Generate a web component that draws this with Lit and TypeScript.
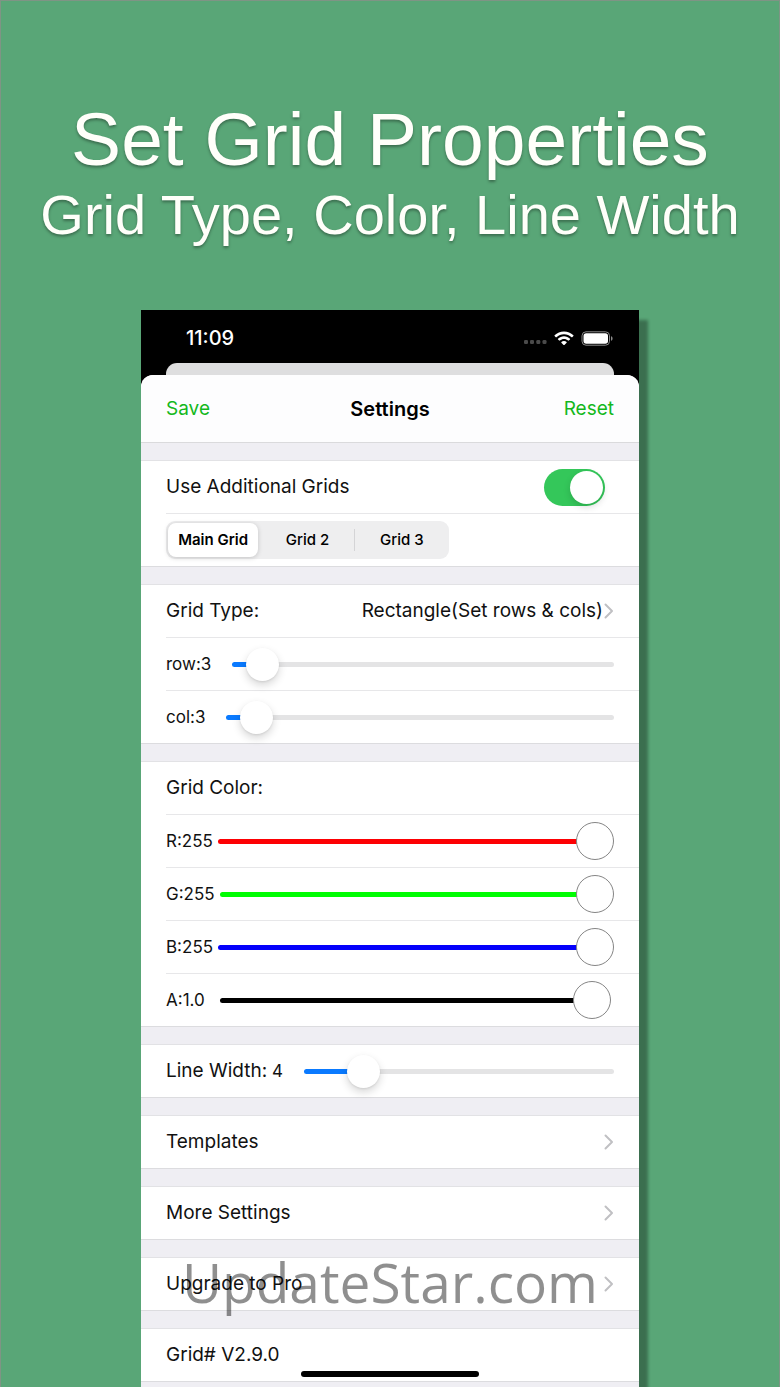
import { LitElement, html, css } from "lit";
import { customElement, property, state } from "lit/decorators.js";

type Skin = "ios" | "red" | "lime" | "blue" | "black";

interface SliderSpec {
  id: string;
  label: string;
  reading?: string;
  value: number;
  skin: Skin;
  spacing: "wide" | "tight" | "medium";
}

const GRID_SLIDERS: SliderSpec[] = [
  { id: "row", label: "row:3", value: 39, skin: "ios", spacing: "wide" },
  { id: "col", label: "col:3", value: 39, skin: "ios", spacing: "wide" },
];

const COLOR_SLIDERS: SliderSpec[] = [
  { id: "red", label: "R:255", value: 1000, skin: "red", spacing: "tight" },
  { id: "green", label: "G:255", value: 1000, skin: "lime", spacing: "tight" },
  { id: "blue", label: "B:255", value: 1000, skin: "blue", spacing: "tight" },
  { id: "alpha", label: "A:1.0", value: 992, skin: "black", spacing: "medium" },
];

const LINE_SLIDER: SliderSpec = {
  id: "line",
  label: "Line Width:",
  reading: "4",
  value: 157,
  skin: "ios",
  spacing: "wide",
};

const chevron = html`<svg class="chevron" viewBox="0 0 10 16" aria-hidden="true">
  <path d="M1.5 1.5 8 8l-6.5 6.5" />
</svg>`;

@customElement("slider-row")
class SliderRow extends LitElement {
  @property({ attribute: false }) spec!: SliderSpec;
  @state() private current: number | null = null;

  static styles = css`
    :host {
      display: block;
      height: 100%;
    }
    .line {
      display: flex;
      align-items: center;
      height: 100%;
    }
    .wide {
      gap: 21px;
    }
    .medium {
      gap: 15px;
    }
    .tight {
      gap: 5px;
    }
    .label {
      font-size: 17px;
      line-height: 24px;
      white-space: nowrap;
    }
    .name {
      font-size: 19px;
    }
    .range {
      appearance: none;
      flex: 1;
      min-width: 0;
      width: 100%;
      height: 40px;
      margin: 0;
      background: transparent;
      --track: #e4e4e5;
      --size: 33px;
      --ring: none;
      --lift: 0 4px 9px rgba(0, 0, 0, 0.16), 0 1px 2px rgba(0, 0, 0, 0.08);
    }
    .range::-webkit-slider-runnable-track {
      height: 5px;
      border-radius: 3px;
      background: linear-gradient(
        to right,
        var(--tint) var(--fill),
        var(--track) var(--fill)
      );
    }
    .range::-webkit-slider-thumb {
      appearance: none;
      box-sizing: border-box;
      width: var(--size);
      height: var(--size);
      margin-top: calc((5px - var(--size)) / 2);
      border: var(--ring);
      border-radius: 50%;
      background: #fff;
      box-shadow: var(--lift);
    }
    .ios {
      --tint: #0a7aff;
    }
    .red {
      --tint: #fd0003;
    }
    .lime {
      --tint: #00fd02;
    }
    .blue {
      --tint: #0400fb;
    }
    .black {
      --tint: #000;
    }
    .red,
    .lime,
    .blue,
    .black {
      --track: transparent;
      --size: 38px;
      --ring: 1px solid #858585;
      --lift: none;
    }
  `;

  private onInput(e: Event) {
    this.current = Number((e.target as HTMLInputElement).value);
  }

  render() {
    const s = this.spec;
    const value = this.current ?? s.value;
    return html`<div class="line ${s.spacing}">
      <label class="label" for=${s.id}
        >${s.reading ? html`<span class="name">${s.label}</span> ${s.reading}` : s.label}</label
      >
      <input
        class="range ${s.skin}"
        id=${s.id}
        type="range"
        min="0"
        max="1000"
        .value=${String(value)}
        style="--fill: calc(var(--size) / 2 + (100% - var(--size)) * ${value / 1000})"
        @input=${this.onInput}
      />
    </div>`;
  }
}

@customElement("app-root")
class AppRoot extends LitElement {
  static styles = css`
    :host {
      display: block;
      font-family: Inter, "Liberation Sans", sans-serif;
      color: #111;
    }
    .page {
      box-sizing: border-box;
      display: flex;
      flex-direction: column;
      min-height: 100vh;
      overflow: hidden;
      border: 1px solid #7f9485;
      border-bottom: 0;
      background: #59a677;
    }
    .hero {
      padding: 96px 0 61px;
      font-family: "Liberation Sans", Arial, sans-serif;
      text-align: center;
      color: #fffffa;
      text-shadow: 0 2px 3px rgba(0, 0, 0, 0.35);
    }
    .title,
    .subtitle {
      margin: 0;
      font-weight: 400;
      white-space: nowrap;
    }
    .title {
      font-size: 75px;
      line-height: 84px;
    }
    .subtitle {
      font-size: 56px;
      line-height: 68px;
    }
    .phone {
      position: relative;
      flex: 1;
      display: flex;
      flex-direction: column;
      margin: 0 140px;
      background: #000;
      box-shadow: 9px 10px 3px rgba(0, 0, 0, 0.33);
    }
    .status {
      box-sizing: border-box;
      display: flex;
      align-items: center;
      justify-content: space-between;
      height: 53px;
      padding: 3px 26px 0 45px;
      color: #fff;
    }
    .time {
      font-size: 20px;
      font-weight: 500;
      line-height: 24px;
    }
    .signals {
      display: flex;
      align-items: center;
      gap: 7px;
    }
    .dots {
      width: 23px;
      height: 14px;
      fill: #4a4a4a;
    }
    .wifi {
      width: 20px;
      height: 15px;
      fill: #fff;
    }
    .battery {
      width: 32px;
      height: 15px;
    }
    .behind {
      height: 12px;
      margin: 0 25px;
      border-radius: 11px 11px 0 0;
      background: #dededf;
    }
    .sheet {
      flex: 1;
      border-radius: 12px 12px 0 0;
      background: #efeef3;
    }
    .nav {
      display: grid;
      grid-template-columns: 1fr auto 1fr;
      align-items: center;
      height: 67px;
      padding: 0 25px;
      border-bottom: 1px solid #dadadc;
      border-radius: 12px 12px 0 0;
      background: #fdfdfe;
    }
    .heading {
      margin: 0;
      font-size: 20px;
      font-weight: 600;
      line-height: 24px;
      color: #000;
    }
    .action {
      justify-self: start;
      padding: 0;
      border: 0;
      background: none;
      font: inherit;
      font-size: 19px;
      line-height: 24px;
      color: #14b81c;
      cursor: pointer;
    }
    .end {
      justify-self: end;
    }
    .group {
      margin-top: 17px;
      padding-left: 25px;
      border-top: 1px solid #e2e2e5;
      border-bottom: 1px solid #dcdcdf;
      background: #fff;
    }
    .row {
      box-sizing: border-box;
      display: flex;
      align-items: center;
      width: 100%;
      height: 53px;
      padding: 0 25px 0 0;
      border: 0;
      border-top: 1px solid #e7e7e9;
      background: none;
      font: inherit;
      font-size: 19px;
      line-height: 24px;
      color: inherit;
      text-align: left;
      white-space: nowrap;
    }
    .row:first-child {
      height: 52px;
      border-top: 0;
    }
    .grow {
      flex: 1;
    }
    .chevron {
      width: 10px;
      height: 16px;
      margin-left: 1px;
      fill: none;
      stroke: #c0c0c3;
      stroke-width: 2;
      stroke-linecap: round;
      stroke-linejoin: round;
    }
    .switch {
      appearance: none;
      display: flex;
      justify-content: flex-start;
      box-sizing: border-box;
      width: 61px;
      height: 37px;
      margin: 0 9px 0 0;
      padding: 2px;
      border-radius: 19px;
      background: #e4e4e6;
    }
    .switch:checked {
      justify-content: flex-end;
      background: #34c75a;
    }
    .switch::before {
      content: "";
      width: 33px;
      height: 33px;
      border-radius: 50%;
      background: #fff;
      box-shadow: 0 3px 7px rgba(0, 0, 0, 0.15);
    }
    .segments {
      display: grid;
      grid-template-columns: repeat(3, 1fr);
      box-sizing: border-box;
      width: 283px;
      height: 38px;
      margin: 0;
      padding: 0;
      border: 0;
      border-radius: 9px;
      background: #eeeeef;
    }
    .segment {
      display: flex;
      align-items: center;
      justify-content: center;
      font-size: 15px;
      font-weight: 500;
      line-height: 20px;
      color: #000;
    }
    .segment.on {
      margin: 2px;
      border-radius: 8px;
      background: #fff;
      font-weight: 600;
      box-shadow: 0 1px 5px rgba(0, 0, 0, 0.18);
    }
    .segment.ruled {
      background: linear-gradient(#d4d4d6, #d4d4d6) right center / 1px 22px no-repeat;
    }
    .radio {
      appearance: none;
      width: 0;
      height: 0;
      margin: 0;
    }
    .watermark {
      position: absolute;
      left: 0;
      right: 0;
      bottom: 66px;
      font-family: "Open Sans", "Noto Sans", sans-serif;
      font-size: 55px;
      line-height: 78px;
      text-align: center;
      color: rgba(0, 0, 0, 0.44);
      pointer-events: none;
    }
    .home {
      position: absolute;
      left: 50%;
      bottom: 10px;
      width: 178px;
      height: 6px;
      margin-left: -89px;
      border-radius: 3px;
      background: #000;
    }
  `;

  @state() private selected = 0;

  private slider(spec: SliderSpec) {
    return html`<div class="row"><slider-row class="grow" .spec=${spec}></slider-row></div>`;
  }

  private link(text: string) {
    return html`<section class="group">
      <button class="row" type="button"><span class="grow">${text}</span>${chevron}</button>
    </section>`;
  }

  private segment(text: string, i: number) {
    const on = i === this.selected;
    const ruled = !on && i < 2 && i + 1 !== this.selected;
    return html`<label class="segment ${on ? "on" : ruled ? "ruled" : ""}">
      <input
        class="radio"
        type="radio"
        name="grid"
        .checked=${on}
        @change=${() => (this.selected = i)}
      />${text}</label
    >`;
  }

  render() {
    return html`<main class="page">
      <header class="hero">
        <h1 class="title">Set Grid Properties</h1>
        <p class="subtitle">Grid Type, Color, Line Width</p>
      </header>
      <div class="phone">
        <div class="status">
          <span class="time">11:09</span>
          <div class="signals">
            <svg class="dots" viewBox="0 0 23 14" aria-hidden="true">
              <rect x="0" y="9" width="4" height="4" rx="1.3" />
              <rect x="6" y="9" width="4" height="4" rx="1.3" />
              <rect x="12.3" y="9" width="4" height="4" rx="1.3" />
              <rect x="18.5" y="9" width="4" height="4" rx="1.3" />
            </svg>
            <svg class="wifi" viewBox="0 0 20 15" aria-hidden="true">
              <path
                d="M10 .6C6.4.6 3.1 2 .6 4.3c-.2.2-.2.5 0 .7l1.2 1.2c.2.2.5.2.7 0C4.5 4.3 7.1 3.200 10 3.200s5.500 1.100 7.500 3c.2.2.5.2.7 0L19.400 5c.2-.2.2-.5 0-.7C16.900 2 13.600.6 10 .6Z"
              />
              <path
                d="M10 5.300c-2.300 0-4.400.9-6 2.400-.2.2-.2.5 0 .7l1.200 1.200c.2.2.5.2.7 0C7 8.500 8.400 7.900 10 7.900s3 .6 4.100 1.700c.2.2.5.2.7 0L16 8.400c.2-.2.2-.5 0-.7-1.600-1.500-3.700-2.400-6-2.400Z"
              />
              <path
                d="M10 10c-1 0-1.900.4-2.600 1-.2.2-.2.5 0 .7l2.200 2.200c.2.2.6.2.8 0l2.200-2.200c.2-.2.2-.5 0-.7-.7-.6-1.600-1-2.600-1Z"
              />
            </svg>
            <svg class="battery" viewBox="0 0 32 15" aria-hidden="true">
              <rect x="1" y=".8" width="27.500" height="13.400" rx="4" fill="none" stroke="#8a8a8a" />
              <rect x="2.500" y="2.300" width="24.500" height="10.400" rx="2.700" fill="#fff" />
              <path d="M30 5.200c1 .3 1.600 1.200 1.600 2.300S31 9.500 30 9.800Z" fill="#8a8a8a" />
            </svg>
          </div>
        </div>
        <div class="behind"></div>
        <div class="sheet">
          <nav class="nav">
            <button class="action" type="button">Save</button>
            <h2 class="heading">Settings</h2>
            <button class="action end" type="button">Reset</button>
          </nav>
          <section class="group">
            <div class="row">
              <label class="grow" for="additional">Use Additional Grids</label>
              <input class="switch" id="additional" type="checkbox" role="switch" checked />
            </div>
            <div class="row">
              <fieldset class="segments" aria-label="Grid">
                ${["Main Grid", "Grid 2", "Grid 3"].map((t, i) => this.segment(t, i))}
              </fieldset>
            </div>
          </section>
          <section class="group">
            <button class="row" type="button">
              <span class="grow">Grid Type:</span>
              <span>Rectangle(Set rows &amp; cols)</span>${chevron}
            </button>
            ${GRID_SLIDERS.map((s) => this.slider(s))}
          </section>
          <section class="group">
            <div class="row">Grid Color:</div>
            ${COLOR_SLIDERS.map((s) => this.slider(s))}
          </section>
          <section class="group">${this.slider(LINE_SLIDER)}</section>
          ${["Templates", "More Settings", "Upgrade to Pro"].map((t) => this.link(t))}
          <section class="group"><div class="row">Grid# V2.9.0</div></section>
        </div>
        <div class="watermark">UpdateStar.com</div>
        <div class="home"></div>
      </div>
    </main>`;
  }
}
